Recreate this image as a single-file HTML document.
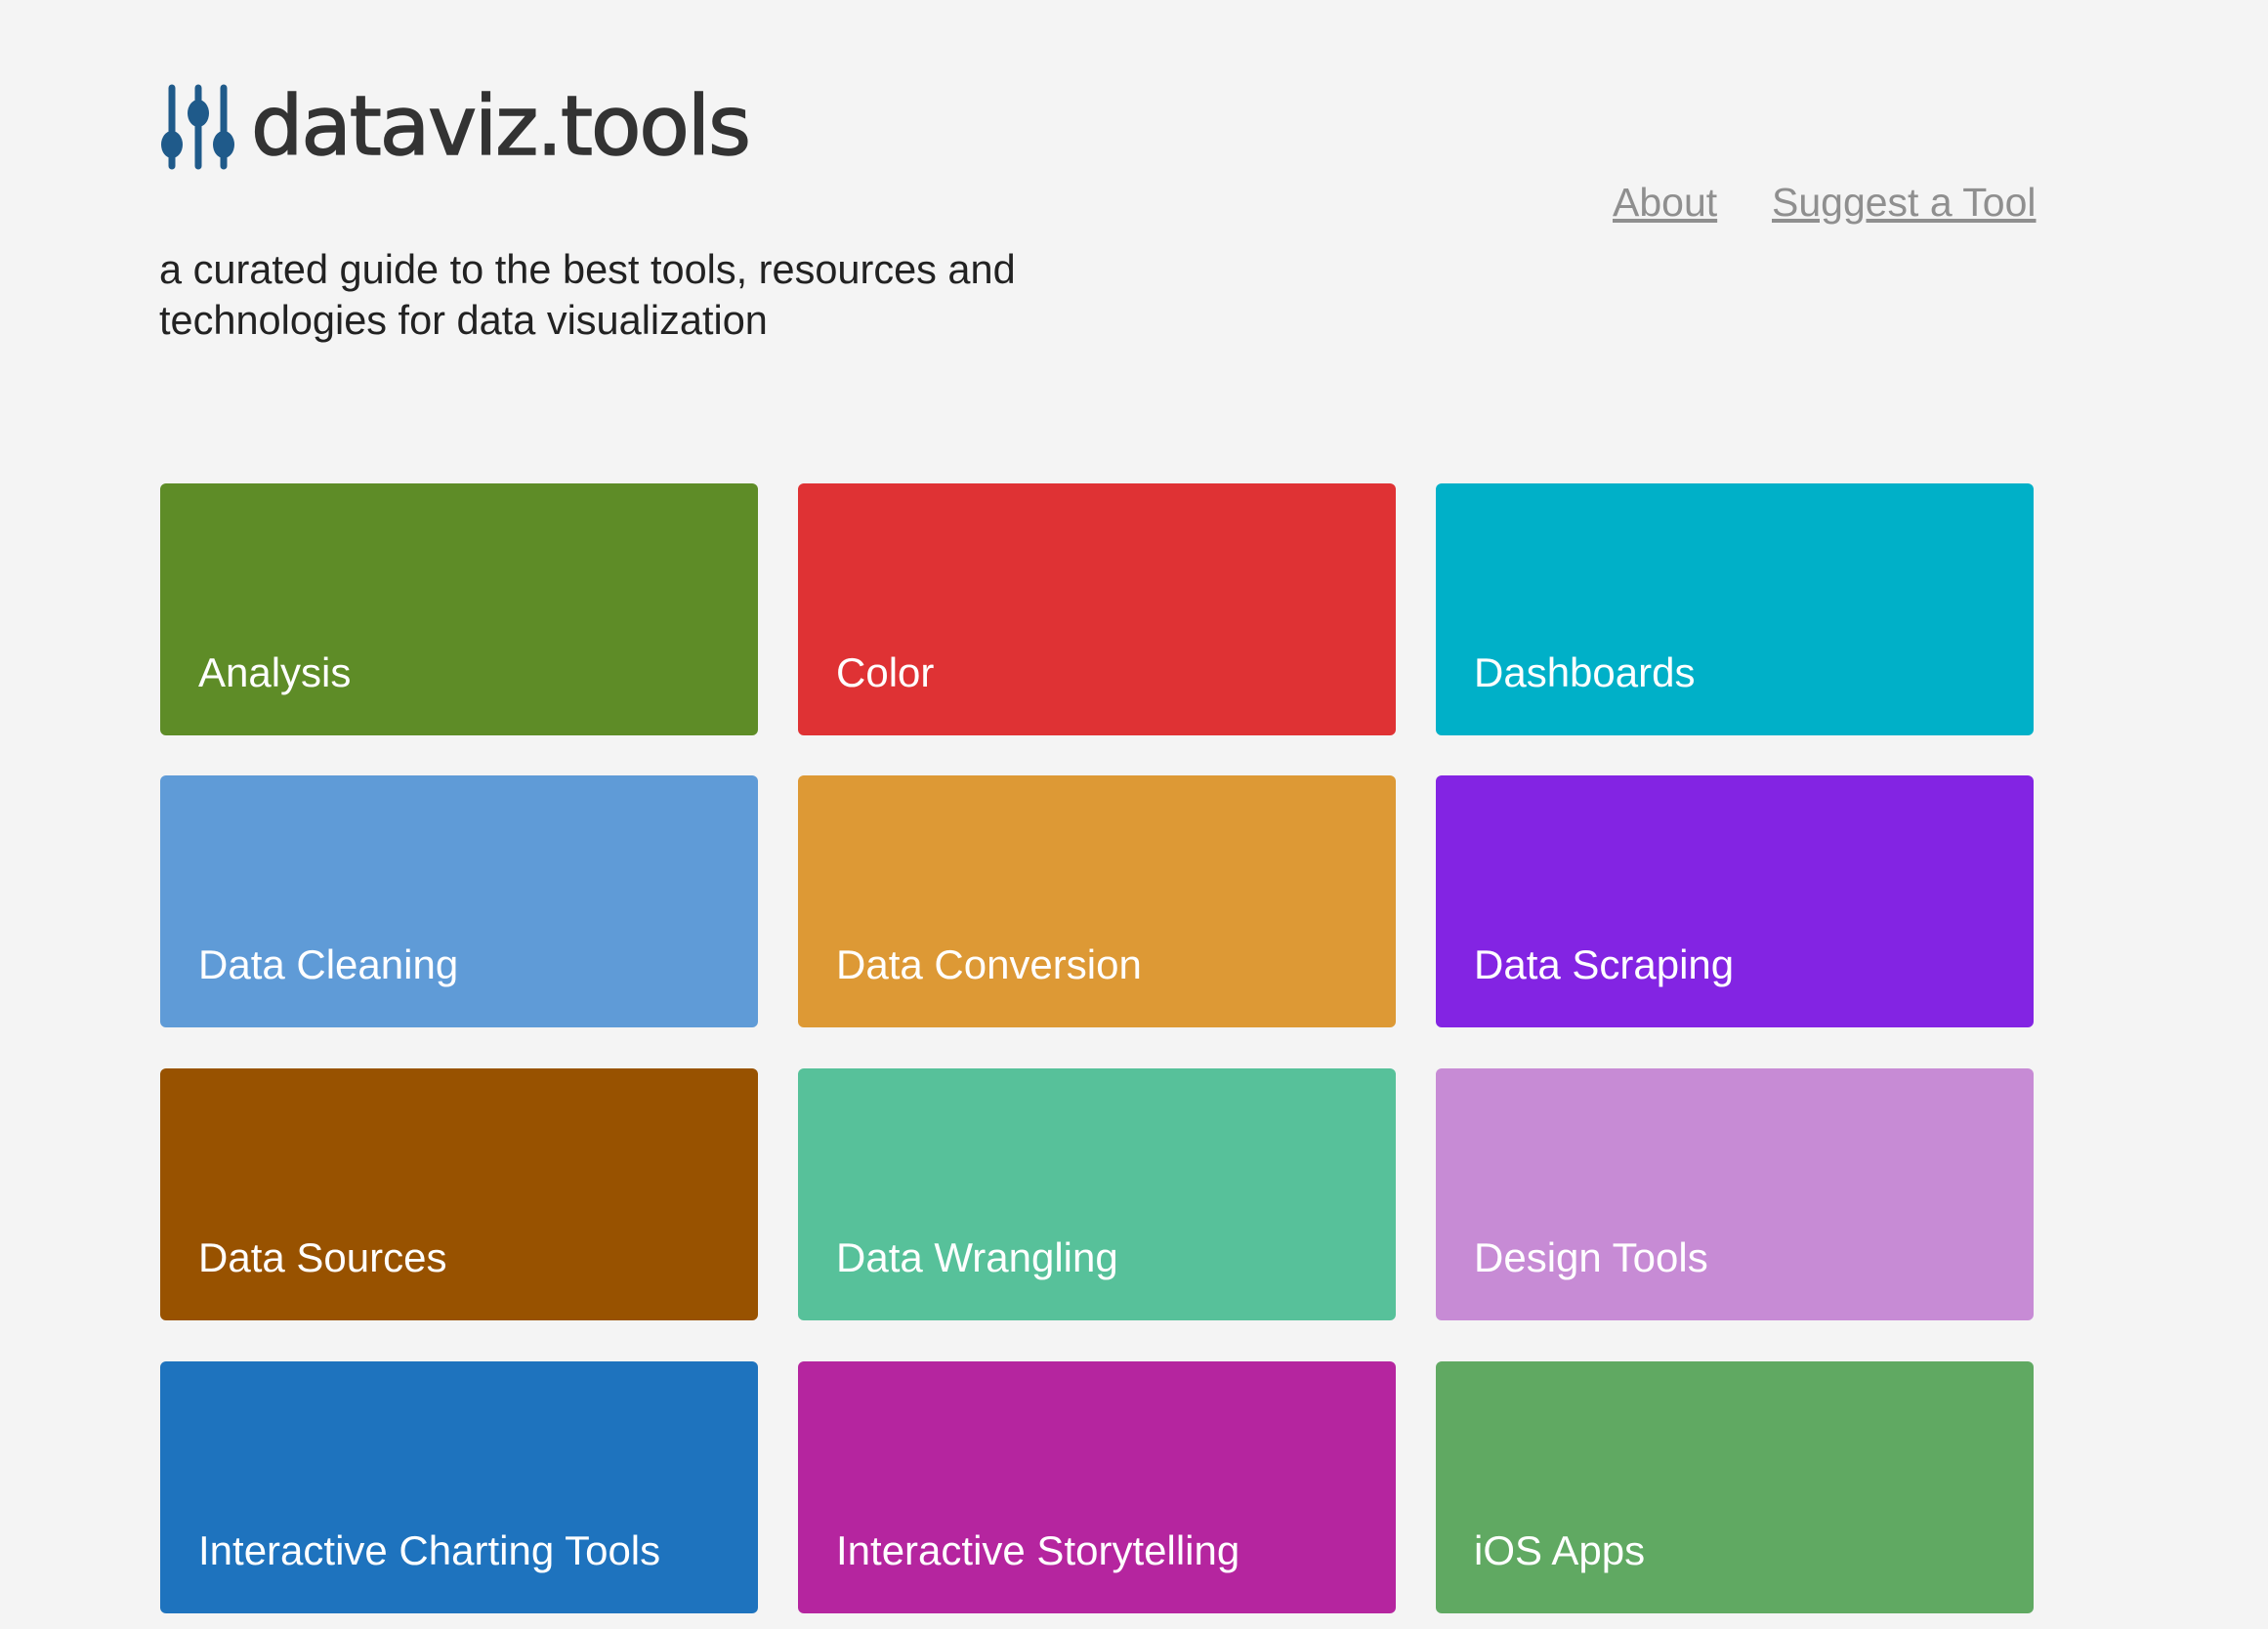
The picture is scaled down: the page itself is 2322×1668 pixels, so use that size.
<!DOCTYPE html>
<html><head><meta charset="utf-8"><style>
body{margin:0;width:2322px;height:1668px;background:#f4f4f4;font-family:"Liberation Sans",sans-serif;position:relative;overflow:hidden}
.logo{position:absolute;left:164px;top:86px}
.brand{position:absolute;left:257px;top:80px;font-size:84px;color:#333;letter-spacing:-2px;font-family:"DejaVu Sans","Liberation Sans",sans-serif;-webkit-text-stroke:1.5px #333}
.tag{position:absolute;left:163px;top:250px;font-size:41.5px;line-height:52px;color:#222}
.nav{position:absolute;top:184px;font-size:41px;color:#8f8f8f;text-decoration:underline}
.c{position:absolute;width:612px;height:258px;border-radius:6px;color:#fff;font-size:42px}
.c span{position:absolute;left:39px;top:170px}
</style></head><body>
<svg class="logo" width="80" height="90" viewBox="0 0 80 90">
<g stroke="#1f5a8a" stroke-width="7" stroke-linecap="round" fill="#1f5a8a">
<line x1="12" y1="4" x2="12" y2="84"/><line x1="39" y1="4" x2="39" y2="84"/><line x1="65" y1="4" x2="65" y2="84"/>
<ellipse cx="12" cy="62" rx="11" ry="14" stroke="none"/><ellipse cx="39" cy="30" rx="11" ry="14" stroke="none"/><ellipse cx="65" cy="62" rx="11" ry="14" stroke="none"/>
</g></svg>
<div class="brand">dataviz.tools</div>
<div class="tag">a curated guide to the best tools, resources and<br>technologies for data visualization</div>
<div class="nav" style="left:1651px">About</div>
<div class="nav" style="left:1814px">Suggest a Tool</div>

<div class="c" style="left:164px;top:495px;background:#5e8c27"><span>Analysis</span></div>
<div class="c" style="left:817px;top:495px;background:#df3234"><span>Color</span></div>
<div class="c" style="left:1470px;top:495px;background:#00b0c8"><span>Dashboards</span></div>
<div class="c" style="left:164px;top:794px;background:#5f9bd7"><span>Data Cleaning</span></div>
<div class="c" style="left:817px;top:794px;background:#dd9935"><span>Data Conversion</span></div>
<div class="c" style="left:1470px;top:794px;background:#8324e3"><span>Data Scraping</span></div>
<div class="c" style="left:164px;top:1094px;background:#985200"><span>Data Sources</span></div>
<div class="c" style="left:817px;top:1094px;background:#57c19a"><span>Data Wrangling</span></div>
<div class="c" style="left:1470px;top:1094px;background:#c78bd5"><span>Design Tools</span></div>
<div class="c" style="left:164px;top:1394px;background:#1e73be"><span>Interactive Charting Tools</span></div>
<div class="c" style="left:817px;top:1394px;background:#b5259f"><span>Interactive Storytelling</span></div>
<div class="c" style="left:1470px;top:1394px;background:#60a962"><span>iOS Apps</span></div>
</body></html>
